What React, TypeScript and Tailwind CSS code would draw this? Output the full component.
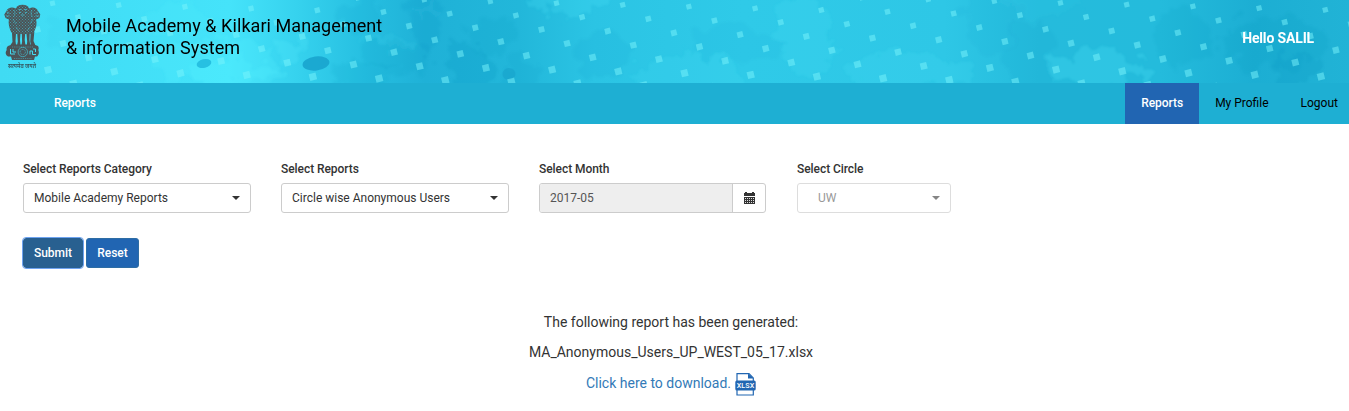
import React from 'react';

const dots: { x: number; y: number; s: number }[] = [];
for (let m = -9; m <= 16; m++) {
  for (let n = -6; n <= 8; n++) {
    const x = 490.3 + m * 66.2 + n * 25.6;
    const y = 1.4 + m * 1.73 + n * 14;
    if (x > -6 && x < 1356 && y > -4 && y < 88) dots.push({ x, y, s: 5 + y * 0.026 });
  }
}

function BannerArt() {
  return (
    <svg className="absolute inset-0 h-[83px] w-[1349px]" viewBox="0 0 1349 83" preserveAspectRatio="none" aria-hidden="true">
      <defs>
        <linearGradient id="sea">
          <stop offset="0" stopColor="#40dbf3" />
          <stop offset=".07" stopColor="#41def6" />
          <stop offset=".17" stopColor="#45e3fa" />
          <stop offset=".22" stopColor="#36d2ee" />
          <stop offset=".27" stopColor="#26bfe1" />
          <stop offset=".315" stopColor="#1fb1d7" />
          <stop offset=".385" stopColor="#22b7da" />
          <stop offset=".44" stopColor="#2bc4e4" />
          <stop offset=".55" stopColor="#2fcae8" />
          <stop offset=".7" stopColor="#2ec7e6" />
          <stop offset=".77" stopColor="#25bbdc" />
          <stop offset=".86" stopColor="#24bbdc" />
          <stop offset=".93" stopColor="#1caed3" />
          <stop offset="1" stopColor="#21b3d6" />
        </linearGradient>
        <filter id="ragged" x="-10%" y="-40%" width="120%" height="180%">
          <feTurbulence type="fractalNoise" baseFrequency=".05" numOctaves="4" seed="8" result="n" />
          <feDisplacementMap in="SourceGraphic" in2="n" scale="38" xChannelSelector="R" yChannelSelector="G" />
          <feGaussianBlur stdDeviation="1" />
        </filter>
      </defs>
      <rect width="1349" height="83" fill="url(#sea)" />
      <g filter="url(#ragged)">
        <g fill="#55f0ff">
          <ellipse cx="215" cy="62" rx="62" ry="22" opacity=".22" />
          <ellipse cx="175" cy="18" rx="42" ry="15" opacity=".14" />
          <ellipse cx="235" cy="75" rx="42" ry="16" opacity=".22" />
          <ellipse cx="292" cy="48" rx="17" ry="10" opacity=".2" />
          <ellipse cx="385" cy="40" rx="26" ry="6" opacity=".08" />
          <ellipse cx="425" cy="13" rx="14" ry="4" opacity=".1" />
          <ellipse cx="570" cy="0" rx="42" ry="15" opacity=".18" />
          <ellipse cx="690" cy="76" rx="55" ry="22" opacity=".12" />
          <ellipse cx="805" cy="35" rx="30" ry="38" opacity=".12" />
          <ellipse cx="910" cy="72" rx="60" ry="18" opacity=".12" />
          <ellipse cx="1095" cy="68" rx="48" ry="19" opacity=".2" />
          <ellipse cx="1040" cy="4" rx="42" ry="12" opacity=".06" />
        </g>
        <g fill="#0c8fbd">
          <ellipse cx="72" cy="30" rx="30" ry="11" opacity=".03" />
          <ellipse cx="365" cy="76" rx="30" ry="12" opacity=".1" />
          <ellipse cx="425" cy="20" rx="14" ry="40" opacity=".14" />
          <ellipse cx="360" cy="14" rx="24" ry="14" opacity=".08" />
          <ellipse cx="400" cy="57" rx="34" ry="17" opacity=".1" />
          <ellipse cx="469" cy="67" rx="24" ry="23" opacity=".18" />
          <ellipse cx="492" cy="35" rx="25" ry="18" opacity=".1" />
          <ellipse cx="520" cy="75" rx="18" ry="19" opacity=".08" />
          <ellipse cx="605" cy="54" rx="29" ry="23" opacity=".08" />
          <ellipse cx="733" cy="44" rx="47" ry="16" opacity=".05" />
          <ellipse cx="990" cy="20" rx="29" ry="32" opacity=".05" />
          <ellipse cx="1030" cy="58" rx="25" ry="37" opacity=".08" />
          <ellipse cx="1185" cy="37" rx="30" ry="26" opacity=".1" />
          <ellipse cx="1275" cy="42" rx="53" ry="25" opacity=".13" />
          <ellipse cx="1297" cy="69" rx="30" ry="16" opacity=".16" />
        </g>
      </g>
      <ellipse cx="204" cy="63.5" rx="7.5" ry="4.3" transform="rotate(-14 204 63.5)" fill="#27c0e2" />
      <ellipse cx="316" cy="63.5" rx="13.5" ry="7" transform="rotate(-7 316 63.5)" fill="#18a2cd" opacity=".85" />
      <ellipse cx="509" cy="74" rx="6.500" ry="6" fill="#159ac6" opacity=".4" />
      {dots.map((d, i) => (
        <rect key={i} x={d.x - d.s / 2} y={d.y - d.s / 2} width={d.s} height={d.s} fill="#7af3fb" opacity=".5" transform={`rotate(-14 ${d.x} ${d.y})`} />
      ))}
    </svg>
  );
}

function Emblem() {
  return (
    <svg className="ml-1 mt-1 h-[65px] w-[38px] shrink-0" viewBox="0 0 38 65" aria-hidden="true">
      <defs>
        <pattern id="hatch" width="3" height="3" patternUnits="userSpaceOnUse">
          <path d="M0 0h1v1H0zM1.500 1.500h1v1h-1z" fill="#43d9ef" opacity=".5" />
        </pattern>
        <path id="lions" d="M12 4.500C12.500 2 15 .8 18.500.8s6 1.200 6.500 3.700l2-.8c3-1 6 .5 7 3.300l2.300 3.500-1 3.500-3.300 1.500c1 3 .5 7.500-1 10L29.500 29l-2 1H10l-2.500-1.500C5.500 25 4 19 5 15.500L1.500 14 .3 10.500 2.500 7c1-3 5-4.500 9.500-2.500z" />
        <path id="base" d="M4 42l4-1.500h22l4 1.500c1 2 .8 3 .2 4 1.300 2 .5 5.500-1.200 6.500H31l-1 3.500H8l-1-3.500H4C1.500 51 1 48 2.800 46c-.6-1-.3-2.500 1.200-4z" />
      </defs>
      <g fill="#4b5357">
        <use href="#lions" />
        <path d="M8 29h4l-.5 8 .5 4H6.500l2-3zM13.200 29h3.300l-.5 7 .5 5.500H13l.8-4zM17.800 29h3.400l-.5 7 .8 5.500h-4l.6-4zM22.400 29h3.300l-.2 7 .8 5.500h-3.500l.4-4zM26.700 28h3.600L29.500 37l2 4.500H27l-.8-4z" />
        <use href="#base" />
      </g>
      <use href="#lions" fill="url(#hatch)" />
      <g fill="none" stroke="#43d9ef" strokeWidth=".7">
        <path d="M14.500 5.500h3M20 5.500h3M15 8.500h2M21 8.500h2M17 11h3.500M3 8l2.500 1.500M2 12h3.500M34 8l-2.500 1.500M35 12h-3.500" opacity=".85" />
        <path d="M10 6c1.500 2 1 5-.5 7M28 6c-1.500 2-1 5 .5 7M9 15l3 5M29 15l-3 5M12 23l3 4M26 23l-3 4" opacity=".6" />
        <circle cx="18.800" cy="48" r="4.700" opacity=".8" />
        <circle cx="18.800" cy="48" r="2.600" strokeDasharray=".8 .8" />
        <path d="M6.500 45v5h4.500M9 45v3h3M26 50.500V47h2.500v3.500H32M29 45h2.500v3" strokeWidth="1" />
        <path d="M8 43h21M10 54.500h18" strokeDasharray="1.200 1" opacity=".6" />
      </g>
      <text x="4" y="63.500" textLength="28" lengthAdjust="spacingAndGlyphs" fontSize="6.500" fontWeight="600" fill="#35525a" className="font-['Noto_Sans','Noto_Sans_Devanagari',sans-serif]">सत्यमेव जयते</text>
    </svg>
  );
}

function Caret() {
  return (
    <svg className="h-1 w-2" viewBox="0 0 8 4" aria-hidden="true">
      <path d="M0 0h8L4 4z" fill="currentColor" />
    </svg>
  );
}

function Label({ children }: { children: React.ReactNode }) {
  return <div className="mb-[5px] h-[17px] text-[12px] leading-[17px] font-medium tracking-[-0.06px] text-[#333]">{children}</div>;
}

function Select({ label, value }: { label: string; value: string }) {
  return (
    <div className="mr-[30px] w-[228px]">
      <Label>{label}</Label>
      <button className="flex h-[30px] w-full items-center justify-between rounded-[3px] border border-[#ccc] bg-white pr-[10px] pl-[10px] text-[12px] text-[#333]">
        <span>{value}</span>
        <Caret />
      </button>
    </div>
  );
}

function CalendarIcon() {
  return (
    <svg className="mb-px h-[12px] w-[11px]" viewBox="0 0 11 12" shapeRendering="crispEdges" aria-hidden="true">
      <path d="M1 0h2v1h5V0h2v1h1v3H0V1h1zM0 5h11v7H0z" fill="#333" />
      <path d="M1 6h1v1H1zM3 6h1v1H3zM5 6h1v1H5zM7 6h1v1H7zM9 6h1v1H9zM1 8h1v1H1zM3 8h1v1H3zM5 8h1v1H5zM7 8h1v1H7zM9 8h1v1H9zM1 10h1v1H1zM3 10h1v1H3zM5 10h1v1H5zM7 10h1v1H7zM9 10h1v1H9z" fill="#ddd" />
    </svg>
  );
}

function XlsxIcon() {
  return (
    <svg className="h-6 w-[21px]" viewBox="0 0 21 24" aria-hidden="true">
      <path d="M2 1.600h12l4.300 4.500V23H2z" fill="#fff" stroke="#2166b2" strokeWidth="1.200" />
      <path d="M13 1.600v5h5.500z" fill="#2166b2" />
      <rect x=".3" y="8.500" width="20.400" height="10" rx="1.500" fill="#2166b2" />
      <text x="1.800" y="16.200" textLength="17.400" lengthAdjust="spacing" fontSize="7.200" fontWeight="500" fill="#fff" className="font-['Roboto',sans-serif]">XLSX</text>
    </svg>
  );
}

export default function App() {
  return (
    <div className="h-[411px] w-[1349px] overflow-hidden bg-white font-['Roboto',sans-serif]">
      <header className="relative h-[83px] overflow-hidden">
        <BannerArt />
        <div className="relative flex h-full items-start">
          <Emblem />
          <h1 className="ml-6 mt-[15px] grow text-[18px] leading-[22px] font-normal tracking-[0.07px] text-black">
            Mobile Academy &amp; Kilkari Management
            <br />
            &amp; information System
          </h1>
          <div className="mt-[28px] mr-[35px] text-[14px] leading-5 font-bold tracking-[-0.15px] text-white">Hello SALIL</div>
        </div>
      </header>
      <nav className="flex h-[41px] items-center bg-[#1eafd3] text-[12px] text-black">
        <span className="mb-[2px] ml-[54px] grow font-medium tracking-[-0.06px] text-white">Reports</span>
        <span className="flex h-full w-[74px] items-center justify-center bg-[#2165b2] pb-[2px] font-medium tracking-[-0.06px] text-white">Reports</span>
        <span className="mb-[2px] ml-4">My Profile</span>
        <span className="mr-[11px] mb-[2px] ml-[32px]">Logout</span>
      </nav>
      <main>
        <section className="flex pt-[37px] pl-[23px]">
          <Select label="Select Reports Category" value="Mobile Academy Reports" />
          <Select label="Select Reports" value="Circle wise Anonymous Users" />
          <div className="mr-[31px] w-[227px]">
            <Label>Select Month</Label>
            <div className="flex h-[30px] overflow-hidden rounded-[3px] border border-[#ccc]">
              <div className="flex grow items-center bg-[#eee] pl-[10px] text-[12px] text-[#555]">2017-05</div>
              <div className="flex w-[33px] items-center justify-center border-l border-[#ccc]">
                <CalendarIcon />
              </div>
            </div>
          </div>
          <div className="w-[154px]">
            <Label>Select Circle</Label>
            <button disabled className="flex h-[30px] w-full items-center justify-between rounded-[3px] border border-[#ddd] bg-white pr-[10px] pl-5 text-[12px] text-[#858585]">
              <span className="text-[#999]">UW</span>
              <Caret />
            </button>
          </div>
        </section>
        <section className="flex gap-[3px] pt-[25px] pl-[23px] text-[12px] font-medium text-white">
          <button className="h-[30px] w-[60px] rounded-[3px] border border-[#286090] bg-[#286090] outline outline-[#6ea3f0]">Submit</button>
          <button className="h-[30px] w-[53px] rounded-[3px] border border-[#2e6da4] bg-[#2165b2]">Reset</button>
        </section>
        <section className="flex w-[1342px] flex-col items-center pt-[44px] text-[14px] leading-5 text-[#333]">
          <p>The following report has been generated:</p>
          <p className="mt-[10px]">MA_Anonymous_Users_UP_WEST_05_17.xlsx</p>
          <div className="mt-[10px] flex items-center gap-1">
            <a className="mb-[2px] text-[#337ab7]">Click here to download.</a>
            <XlsxIcon />
          </div>
        </section>
      </main>
    </div>
  );
}
